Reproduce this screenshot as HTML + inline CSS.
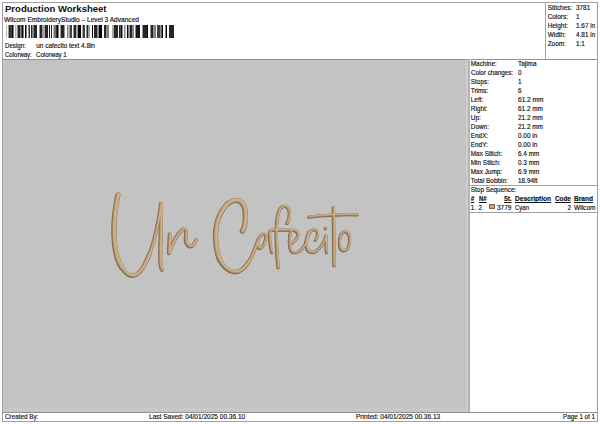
<!DOCTYPE html>
<html><head><meta charset="utf-8"><style>
html,body{margin:0;padding:0;background:#fff;}
body{width:600px;height:424px;position:relative;overflow:hidden;font-family:"Liberation Sans", sans-serif;color:#111;}
.t{position:absolute;white-space:nowrap;line-height:1;transform-origin:0 0;-webkit-text-stroke:0.15px #111;}
.r{position:absolute;}
</style></head><body>
<div class="r" style="left:2px;top:2px;width:594px;height:418px;border:1px solid #a0a0a0;"></div>
<div class="r" style="left:545px;top:2px;width:1px;height:57px;background:#a4a4a4;"></div>
<div class="r" style="left:2px;top:59px;width:596px;height:1px;background:#929292;"></div>
<div class="r" style="left:3px;top:60px;width:465px;height:352px;background:#c3c3c3;"></div>
<div class="r" style="left:3px;top:60px;width:1px;height:352px;background:#cbcbcb;"></div>
<div class="r" style="left:3px;top:408px;width:463px;height:3px;background:#c8c8c8;"></div>
<div class="r" style="left:466px;top:60px;width:2px;height:352px;background:#cecece;"></div>
<div class="r" style="left:468px;top:59px;width:2px;height:353px;background:#b4b4b4;"></div>
<div class="r" style="left:469px;top:185px;width:128px;height:1px;background:#a0a0a0;"></div>
<div class="r" style="left:469px;top:212px;width:128px;height:1px;background:#a0a0a0;"></div>
<div class="r" style="left:2px;top:412px;width:596px;height:1px;background:#929292;"></div>
<div class="r" style="left:489.2px;top:203.7px;width:5.8px;height:5.7px;background:#cf9f7e;box-sizing:border-box;border:1px solid #8a6249;"></div>
<svg class="r" style="left:0;top:0" width="600" height="60" viewBox="0 0 600 60"><rect x="6" y="25" width="1" height="13" fill="rgb(178,178,178)"/><rect x="8.5" y="25" width="3" height="13" fill="rgb(51,51,51)"/><rect x="11.5" y="25" width="2" height="13" fill="rgb(0,0,0)"/><rect x="15" y="25" width="1.5" height="13" fill="rgb(178,178,178)"/><rect x="17.5" y="25" width="2.5" height="13" fill="rgb(38,38,38)"/><rect x="20" y="25" width="1.5" height="13" fill="rgb(128,128,128)"/><rect x="21.5" y="25" width="2" height="13" fill="rgb(0,0,0)"/><rect x="25" y="25" width="1.5" height="13" fill="rgb(0,0,0)"/><rect x="28.5" y="25" width="1.5" height="13" fill="rgb(51,51,51)"/><rect x="31" y="25" width="1.5" height="13" fill="rgb(38,38,38)"/><rect x="32.5" y="25" width="1.5" height="13" fill="rgb(128,128,128)"/><rect x="34" y="25" width="3" height="13" fill="rgb(38,38,38)"/><rect x="39.5" y="25" width="3" height="13" fill="rgb(38,38,38)"/><rect x="42.5" y="25" width="2.5" height="13" fill="rgb(166,166,166)"/><rect x="45" y="25" width="3" height="13" fill="rgb(38,38,38)"/><rect x="49" y="25" width="1" height="13" fill="rgb(38,38,38)"/><rect x="51" y="25" width="1" height="13" fill="rgb(38,38,38)"/><rect x="53.5" y="25" width="2.5" height="13" fill="rgb(115,115,115)"/><rect x="56" y="25" width="1" height="13" fill="rgb(51,51,51)"/><rect x="57" y="25" width="1.5" height="13" fill="rgb(0,0,0)"/><rect x="60" y="25" width="1" height="13" fill="rgb(153,153,153)"/><rect x="61" y="25" width="3.5" height="13" fill="rgb(38,38,38)"/><rect x="67" y="25" width="1.5" height="13" fill="rgb(128,128,128)"/><rect x="69.5" y="25" width="2.5" height="13" fill="rgb(64,64,64)"/><rect x="73.5" y="25" width="2.5" height="13" fill="rgb(38,38,38)"/><rect x="76" y="25" width="2" height="13" fill="rgb(166,166,166)"/><rect x="78" y="25" width="3" height="13" fill="rgb(0,0,0)"/><rect x="82.5" y="25" width="2.5" height="13" fill="rgb(64,64,64)"/><rect x="86.5" y="25" width="2" height="13" fill="rgb(38,38,38)"/><rect x="88.5" y="25" width="1.5" height="13" fill="rgb(166,166,166)"/><rect x="92" y="25" width="1" height="13" fill="rgb(0,0,0)"/><rect x="94" y="25" width="3" height="13" fill="rgb(38,38,38)"/><rect x="97" y="25" width="2" height="13" fill="rgb(140,140,140)"/><rect x="99" y="25" width="3" height="13" fill="rgb(0,0,0)"/><rect x="104" y="25" width="2.5" height="13" fill="rgb(38,38,38)"/><rect x="107.5" y="25" width="1" height="13" fill="rgb(0,0,0)"/><rect x="112" y="25" width="2" height="13" fill="rgb(166,166,166)"/><rect x="114" y="25" width="4" height="13" fill="rgb(38,38,38)"/><rect x="119" y="25" width="1.5" height="13" fill="rgb(38,38,38)"/><rect x="120.5" y="25" width="2" height="13" fill="rgb(13,13,13)"/><rect x="124" y="25" width="1.5" height="13" fill="rgb(128,128,128)"/><rect x="127" y="25" width="1.5" height="13" fill="rgb(0,0,0)"/><rect x="129.5" y="25" width="3" height="13" fill="rgb(38,38,38)"/><rect x="132.5" y="25" width="1.5" height="13" fill="rgb(128,128,128)"/><rect x="135.5" y="25" width="4.5" height="13" fill="rgb(25,25,25)"/><rect x="142.5" y="25" width="4.5" height="13" fill="rgb(38,38,38)"/><rect x="147" y="25" width="1" height="13" fill="rgb(0,0,0)"/><rect x="150.5" y="25" width="3" height="13" fill="rgb(38,38,38)"/><rect x="154.5" y="25" width="1" height="13" fill="rgb(0,0,0)"/><rect x="157" y="25" width="3" height="13" fill="rgb(64,64,64)"/><rect x="160" y="25" width="1.5" height="13" fill="rgb(140,140,140)"/><rect x="161.5" y="25" width="1.5" height="13" fill="rgb(0,0,0)"/><rect x="165.5" y="25" width="1.5" height="13" fill="rgb(0,0,0)"/><rect x="169" y="25" width="5" height="13" fill="rgb(38,38,38)"/></svg>
<svg class="r" style="left:0;top:0" width="600" height="424" viewBox="0 0 600 424">
<g fill="none" stroke-linecap="round" stroke-linejoin="round">
<g stroke="#76614a" transform="translate(-0.45,0.45)"><path d="M118.3,194.5 C116,205 114,220 114.3,232 C114.5,248 117,260 122,267" stroke-width="5.0"/><path d="M122,267 C125,272 129,275.5 133,275.5 C139,275 145,266 150,253" stroke-width="4.2"/><path d="M150,253 C155,240 159,220 161.3,203.5" stroke-width="3.4"/><path d="M161.3,203.5 C161.5,220 160.5,245 160.6,258 C160.7,264 161.5,268 162.5,269.5" stroke-width="3.9"/><path d="M170,233.8 C169.8,240 169.3,248 169.3,253 C172,245 177.5,234 182.5,229.5 C185.5,227 187,229.5 186.3,234 C185.6,238.5 186,244 189.5,246 C192.5,247 195,243 196.6,239.8" stroke-width="3.6"/><path d="M242.7,230.7 C245,227 246,218 245.5,211 C245,204.5 241,200 236.5,200 C231.5,200 227,203 223,209.5 C219,215.5 216.5,223 216,232 C215.6,241 216.5,251 220,259.5" stroke-width="5.0"/><path d="M220,259.5 C223,265.5 228,270.5 234,271.6 C240,272.5 245,268 249,261.5" stroke-width="4.2"/><path d="M249,261.5 C252.5,256 255.5,248 257.5,242" stroke-width="3.4"/><path d="M257.5,242 C258.5,238 261.5,234 264,233.8 C266.5,233.6 266.8,236.5 265.8,239.5 C264.8,243 262.5,248 260,248.3 C258,248.5 257.8,246 258.5,243" stroke-width="3.0"/><path d="M269.8,233 C270,240 270.5,248 272.3,252.2" stroke-width="3.0"/><path d="M269.8,233 C269.8,231 271,229.8 273,229.8 L291,229.7 C295,229.6 298.5,231.5 298.3,234.5 C298,238 294,242.5 290.8,243.3" stroke-width="3.0"/><path d="M287.3,223.1 C289.5,220 290,214 289.6,211 C289,207.5 287,206 284.8,206 C282,206 280,208.5 278.8,212 C277,218 276.6,226 276.6,235 C276.8,245 277.3,257 278.5,267.4" stroke-width="3.3"/><path d="M291.5,230.5 C289.5,234 289,245 291,250 C293,253.5 298,253 301.5,249.5 C303.5,247.5 305,245 306.5,242.6" stroke-width="3.0"/><path d="M306.3,242.6 C307,239 308.5,234 310.5,231.5 C312,229.5 314,229 315.8,229.6 C318,230.5 318.3,234 317.6,236 C317,238 316,239.5 315.5,240" stroke-width="3.0"/><path d="M309.5,231.5 C306.8,235 306,242 306.5,246 C307,250 309.5,252.2 312.9,252.1 C317,252 320,248 323,243.6 C324.5,241 325.5,238.5 326.1,236" stroke-width="3.0"/><path d="M326.1,235.5 C326.2,242 326.3,248 326.8,252.3" stroke-width="3.0"/><path d="M333.7,207.4 C333.9,225 334.1,250 334.4,265.5" stroke-width="3.3"/><path d="M309.2,216.8 C320,215.2 345,213.8 357.7,214.6" stroke-width="3.0"/><path d="M348.5,232.5 C346.5,230.5 343.5,231 342,233.5 C340.3,236 339.7,240 339.8,243.5 C340,247.5 341.5,250.5 344,250.5 C347.5,250.5 350,246 350,239.5 C350,235 348.5,231.5 345.5,231.5" stroke-width="3.0"/></g>
<g stroke="#a48867"><path d="M118.3,194.5 C116,205 114,220 114.3,232 C114.5,248 117,260 122,267" stroke-width="4.50"/><path d="M122,267 C125,272 129,275.5 133,275.5 C139,275 145,266 150,253" stroke-width="3.70"/><path d="M150,253 C155,240 159,220 161.3,203.5" stroke-width="2.90"/><path d="M161.3,203.5 C161.5,220 160.5,245 160.6,258 C160.7,264 161.5,268 162.5,269.5" stroke-width="3.40"/><path d="M170,233.8 C169.8,240 169.3,248 169.3,253 C172,245 177.5,234 182.5,229.5 C185.5,227 187,229.5 186.3,234 C185.6,238.5 186,244 189.5,246 C192.5,247 195,243 196.6,239.8" stroke-width="3.10"/><path d="M242.7,230.7 C245,227 246,218 245.5,211 C245,204.5 241,200 236.5,200 C231.5,200 227,203 223,209.5 C219,215.5 216.5,223 216,232 C215.6,241 216.5,251 220,259.5" stroke-width="4.50"/><path d="M220,259.5 C223,265.5 228,270.5 234,271.6 C240,272.5 245,268 249,261.5" stroke-width="3.70"/><path d="M249,261.5 C252.5,256 255.5,248 257.5,242" stroke-width="2.90"/><path d="M257.5,242 C258.5,238 261.5,234 264,233.8 C266.5,233.6 266.8,236.5 265.8,239.5 C264.8,243 262.5,248 260,248.3 C258,248.5 257.8,246 258.5,243" stroke-width="2.50"/><path d="M269.8,233 C270,240 270.5,248 272.3,252.2" stroke-width="2.50"/><path d="M269.8,233 C269.8,231 271,229.8 273,229.8 L291,229.7 C295,229.6 298.5,231.5 298.3,234.5 C298,238 294,242.5 290.8,243.3" stroke-width="2.50"/><path d="M287.3,223.1 C289.5,220 290,214 289.6,211 C289,207.5 287,206 284.8,206 C282,206 280,208.5 278.8,212 C277,218 276.6,226 276.6,235 C276.8,245 277.3,257 278.5,267.4" stroke-width="2.80"/><path d="M291.5,230.5 C289.5,234 289,245 291,250 C293,253.5 298,253 301.5,249.5 C303.5,247.5 305,245 306.5,242.6" stroke-width="2.50"/><path d="M306.3,242.6 C307,239 308.5,234 310.5,231.5 C312,229.5 314,229 315.8,229.6 C318,230.5 318.3,234 317.6,236 C317,238 316,239.5 315.5,240" stroke-width="2.50"/><path d="M309.5,231.5 C306.8,235 306,242 306.5,246 C307,250 309.5,252.2 312.9,252.1 C317,252 320,248 323,243.6 C324.5,241 325.5,238.5 326.1,236" stroke-width="2.50"/><path d="M326.1,235.5 C326.2,242 326.3,248 326.8,252.3" stroke-width="2.50"/><path d="M333.7,207.4 C333.9,225 334.1,250 334.4,265.5" stroke-width="2.80"/><path d="M309.2,216.8 C320,215.2 345,213.8 357.7,214.6" stroke-width="2.50"/><path d="M348.5,232.5 C346.5,230.5 343.5,231 342,233.5 C340.3,236 339.7,240 339.8,243.5 C340,247.5 341.5,250.5 344,250.5 C347.5,250.5 350,246 350,239.5 C350,235 348.5,231.5 345.5,231.5" stroke-width="2.50"/></g>
<g stroke="#c6a880" transform="translate(0.3,-0.3)"><path d="M118.3,194.5 C116,205 114,220 114.3,232 C114.5,248 117,260 122,267" stroke-width="3.20"/><path d="M122,267 C125,272 129,275.5 133,275.5 C139,275 145,266 150,253" stroke-width="2.40"/><path d="M150,253 C155,240 159,220 161.3,203.5" stroke-width="1.60"/><path d="M161.3,203.5 C161.5,220 160.5,245 160.6,258 C160.7,264 161.5,268 162.5,269.5" stroke-width="2.10"/><path d="M170,233.8 C169.8,240 169.3,248 169.3,253 C172,245 177.5,234 182.5,229.5 C185.5,227 187,229.5 186.3,234 C185.6,238.5 186,244 189.5,246 C192.5,247 195,243 196.6,239.8" stroke-width="1.80"/><path d="M242.7,230.7 C245,227 246,218 245.5,211 C245,204.5 241,200 236.5,200 C231.5,200 227,203 223,209.5 C219,215.5 216.5,223 216,232 C215.6,241 216.5,251 220,259.5" stroke-width="3.20"/><path d="M220,259.5 C223,265.5 228,270.5 234,271.6 C240,272.5 245,268 249,261.5" stroke-width="2.40"/><path d="M249,261.5 C252.5,256 255.5,248 257.5,242" stroke-width="1.60"/><path d="M257.5,242 C258.5,238 261.5,234 264,233.8 C266.5,233.6 266.8,236.5 265.8,239.5 C264.8,243 262.5,248 260,248.3 C258,248.5 257.8,246 258.5,243" stroke-width="1.20"/><path d="M269.8,233 C270,240 270.5,248 272.3,252.2" stroke-width="1.20"/><path d="M269.8,233 C269.8,231 271,229.8 273,229.8 L291,229.7 C295,229.6 298.5,231.5 298.3,234.5 C298,238 294,242.5 290.8,243.3" stroke-width="1.20"/><path d="M287.3,223.1 C289.5,220 290,214 289.6,211 C289,207.5 287,206 284.8,206 C282,206 280,208.5 278.8,212 C277,218 276.6,226 276.6,235 C276.8,245 277.3,257 278.5,267.4" stroke-width="1.50"/><path d="M291.5,230.5 C289.5,234 289,245 291,250 C293,253.5 298,253 301.5,249.5 C303.5,247.5 305,245 306.5,242.6" stroke-width="1.20"/><path d="M306.3,242.6 C307,239 308.5,234 310.5,231.5 C312,229.5 314,229 315.8,229.6 C318,230.5 318.3,234 317.6,236 C317,238 316,239.5 315.5,240" stroke-width="1.20"/><path d="M309.5,231.5 C306.8,235 306,242 306.5,246 C307,250 309.5,252.2 312.9,252.1 C317,252 320,248 323,243.6 C324.5,241 325.5,238.5 326.1,236" stroke-width="1.20"/><path d="M326.1,235.5 C326.2,242 326.3,248 326.8,252.3" stroke-width="1.20"/><path d="M333.7,207.4 C333.9,225 334.1,250 334.4,265.5" stroke-width="1.50"/><path d="M309.2,216.8 C320,215.2 345,213.8 357.7,214.6" stroke-width="1.20"/><path d="M348.5,232.5 C346.5,230.5 343.5,231 342,233.5 C340.3,236 339.7,240 339.8,243.5 C340,247.5 341.5,250.5 344,250.5 C347.5,250.5 350,246 350,239.5 C350,235 348.5,231.5 345.5,231.5" stroke-width="1.20"/></g>
<g stroke="#d8c09a" opacity="0.55" transform="translate(0.5,-0.5)"><path d="M118.3,194.5 C116,205 114,220 114.3,232 C114.5,248 117,260 122,267" stroke-width="1.25"/><path d="M122,267 C125,272 129,275.5 133,275.5 C139,275 145,266 150,253" stroke-width="1.05"/><path d="M150,253 C155,240 159,220 161.3,203.5" stroke-width="0.85"/><path d="M161.3,203.5 C161.5,220 160.5,245 160.6,258 C160.7,264 161.5,268 162.5,269.5" stroke-width="0.97"/><path d="M170,233.8 C169.8,240 169.3,248 169.3,253 C172,245 177.5,234 182.5,229.5 C185.5,227 187,229.5 186.3,234 C185.6,238.5 186,244 189.5,246 C192.5,247 195,243 196.6,239.8" stroke-width="0.90"/><path d="M242.7,230.7 C245,227 246,218 245.5,211 C245,204.5 241,200 236.5,200 C231.5,200 227,203 223,209.5 C219,215.5 216.5,223 216,232 C215.6,241 216.5,251 220,259.5" stroke-width="1.25"/><path d="M220,259.5 C223,265.5 228,270.5 234,271.6 C240,272.5 245,268 249,261.5" stroke-width="1.05"/><path d="M249,261.5 C252.5,256 255.5,248 257.5,242" stroke-width="0.85"/><path d="M257.5,242 C258.5,238 261.5,234 264,233.8 C266.5,233.6 266.8,236.5 265.8,239.5 C264.8,243 262.5,248 260,248.3 C258,248.5 257.8,246 258.5,243" stroke-width="0.75"/><path d="M269.8,233 C270,240 270.5,248 272.3,252.2" stroke-width="0.75"/><path d="M269.8,233 C269.8,231 271,229.8 273,229.8 L291,229.7 C295,229.6 298.5,231.5 298.3,234.5 C298,238 294,242.5 290.8,243.3" stroke-width="0.75"/><path d="M287.3,223.1 C289.5,220 290,214 289.6,211 C289,207.5 287,206 284.8,206 C282,206 280,208.5 278.8,212 C277,218 276.6,226 276.6,235 C276.8,245 277.3,257 278.5,267.4" stroke-width="0.82"/><path d="M291.5,230.5 C289.5,234 289,245 291,250 C293,253.5 298,253 301.5,249.5 C303.5,247.5 305,245 306.5,242.6" stroke-width="0.75"/><path d="M306.3,242.6 C307,239 308.5,234 310.5,231.5 C312,229.5 314,229 315.8,229.6 C318,230.5 318.3,234 317.6,236 C317,238 316,239.5 315.5,240" stroke-width="0.75"/><path d="M309.5,231.5 C306.8,235 306,242 306.5,246 C307,250 309.5,252.2 312.9,252.1 C317,252 320,248 323,243.6 C324.5,241 325.5,238.5 326.1,236" stroke-width="0.75"/><path d="M326.1,235.5 C326.2,242 326.3,248 326.8,252.3" stroke-width="0.75"/><path d="M333.7,207.4 C333.9,225 334.1,250 334.4,265.5" stroke-width="0.82"/><path d="M309.2,216.8 C320,215.2 345,213.8 357.7,214.6" stroke-width="0.75"/><path d="M348.5,232.5 C346.5,230.5 343.5,231 342,233.5 C340.3,236 339.7,240 339.8,243.5 C340,247.5 341.5,250.5 344,250.5 C347.5,250.5 350,246 350,239.5 C350,235 348.5,231.5 345.5,231.5" stroke-width="0.75"/></g>
</g>
<circle cx="325.3" cy="228.6" r="1.8" fill="#76614a"/>
<circle cx="325.7" cy="228.2" r="1.5" fill="#a48867"/>
<circle cx="326" cy="227.9" r="0.8" fill="#c6a880"/>
</svg>
<div class="t" style="left:5.30px;top:4.09px;font-size:9.7px;font-weight:bold;-webkit-text-stroke:0;transform:scaleX(0.9842);">Production Worksheet</div>
<div class="t" style="left:4.20px;top:17.28px;font-size:6.4px;transform:scaleX(1.0298);">Wilcom EmbroideryStudio – Level 3 Advanced</div>
<div class="t" style="left:4.70px;top:42.78px;font-size:6.4px;transform:scaleX(0.9638);">Design:</div>
<div class="t" style="left:36.30px;top:42.78px;font-size:6.4px;">un cafecito text 4.8in</div>
<div class="t" style="left:4.70px;top:51.88px;font-size:6.4px;transform:scaleX(0.9429);">Colorway:</div>
<div class="t" style="left:36.30px;top:51.88px;font-size:6.4px;transform:scaleX(0.9626);">Colorway 1</div>
<div class="t" style="left:547.70px;top:4.78px;font-size:6.4px;">Stitches:</div>
<div class="t" style="left:576.00px;top:4.78px;font-size:6.4px;">3781</div>
<div class="t" style="left:547.70px;top:13.78px;font-size:6.4px;">Colors:</div>
<div class="t" style="left:576.00px;top:13.78px;font-size:6.4px;">1</div>
<div class="t" style="left:547.70px;top:22.58px;font-size:6.4px;">Height:</div>
<div class="t" style="left:576.00px;top:22.58px;font-size:6.4px;">1.67 in</div>
<div class="t" style="left:547.70px;top:31.58px;font-size:6.4px;">Width:</div>
<div class="t" style="left:576.00px;top:31.58px;font-size:6.4px;">4.81 in</div>
<div class="t" style="left:547.70px;top:40.88px;font-size:6.4px;">Zoom:</div>
<div class="t" style="left:576.00px;top:40.88px;font-size:6.4px;">1:1</div>
<div class="t" style="left:4.50px;top:414.08px;font-size:6.4px;transform:scaleX(0.9862);">Created By:</div>
<div class="t" style="left:149.00px;top:414.08px;font-size:6.4px;transform:scaleX(1.0211);">Last Saved: 04/01/2025 00.36.10</div>
<div class="t" style="left:356.00px;top:414.08px;font-size:6.4px;transform:scaleX(1.0207);">Printed: 04/01/2025 00.36.13</div>
<div class="t" style="left:562.50px;top:414.08px;font-size:6.4px;transform:scaleX(0.9808);">Page 1 of 1</div>
<div class="t" style="left:470.80px;top:187.28px;font-size:6.4px;">Stop Sequence:</div>
<div class="t" style="left:470.80px;top:61.08px;font-size:6.4px;">Machine:</div>
<div class="t" style="left:518.00px;top:61.08px;font-size:6.4px;">Tajima</div>
<div class="t" style="left:470.80px;top:70.06px;font-size:6.4px;transform:scaleX(0.9767);">Color changes:</div>
<div class="t" style="left:518.00px;top:70.06px;font-size:6.4px;">0</div>
<div class="t" style="left:470.80px;top:79.03px;font-size:6.4px;">Stops:</div>
<div class="t" style="left:518.00px;top:79.03px;font-size:6.4px;">1</div>
<div class="t" style="left:470.80px;top:88.01px;font-size:6.4px;">Trims:</div>
<div class="t" style="left:518.00px;top:88.01px;font-size:6.4px;">6</div>
<div class="t" style="left:470.80px;top:96.98px;font-size:6.4px;">Left:</div>
<div class="t" style="left:518.00px;top:96.98px;font-size:6.4px;transform:scaleX(1.0270);">61.2 mm</div>
<div class="t" style="left:470.80px;top:105.96px;font-size:6.4px;">Right:</div>
<div class="t" style="left:518.00px;top:105.96px;font-size:6.4px;">61.2 mm</div>
<div class="t" style="left:470.80px;top:114.93px;font-size:6.4px;">Up:</div>
<div class="t" style="left:518.00px;top:114.93px;font-size:6.4px;">21.2 mm</div>
<div class="t" style="left:470.80px;top:123.91px;font-size:6.4px;">Down:</div>
<div class="t" style="left:518.00px;top:123.91px;font-size:6.4px;">21.2 mm</div>
<div class="t" style="left:470.80px;top:132.88px;font-size:6.4px;">EndX:</div>
<div class="t" style="left:518.00px;top:132.88px;font-size:6.4px;">0.00 in</div>
<div class="t" style="left:470.80px;top:141.86px;font-size:6.4px;">EndY:</div>
<div class="t" style="left:518.00px;top:141.86px;font-size:6.4px;">0.00 in</div>
<div class="t" style="left:470.80px;top:150.83px;font-size:6.4px;">Max Stitch:</div>
<div class="t" style="left:518.00px;top:150.83px;font-size:6.4px;">6.4 mm</div>
<div class="t" style="left:470.80px;top:159.81px;font-size:6.4px;">Min Stitch:</div>
<div class="t" style="left:518.00px;top:159.81px;font-size:6.4px;">0.3 mm</div>
<div class="t" style="left:470.80px;top:168.78px;font-size:6.4px;">Max Jump:</div>
<div class="t" style="left:518.00px;top:168.78px;font-size:6.4px;">6.9 mm</div>
<div class="t" style="left:470.80px;top:177.76px;font-size:6.4px;">Total Bobbin:</div>
<div class="t" style="left:518.00px;top:177.76px;font-size:6.4px;">18.94ft</div>
<div class="t" style="left:470.80px;top:204.68px;font-size:6.4px;">1.</div>
<div class="t" style="left:478.40px;top:204.68px;font-size:6.4px;">2</div>
<div class="t" style="left:497.30px;top:204.68px;font-size:6.4px;transform:scaleX(1.0162);">3779</div>
<div class="t" style="left:515.10px;top:204.68px;font-size:6.4px;transform:scaleX(0.9437);">Cyan</div>
<div class="t" style="left:567.60px;top:204.68px;font-size:6.4px;">2</div>
<div class="t" style="left:574.30px;top:204.68px;font-size:6.4px;transform:scaleX(1.0281);">Wilcom</div>
<div class="t" style="left:470.80px;top:195.88px;font-size:6.4px;font-weight:bold;text-decoration:underline;text-underline-offset:0.5px;text-decoration-thickness:0.8px;">#</div>
<div class="t" style="left:478.90px;top:195.88px;font-size:6.4px;font-weight:bold;text-decoration:underline;text-underline-offset:0.5px;text-decoration-thickness:0.8px;transform:scaleX(0.9286);">N#</div>
<div class="t" style="left:504.00px;top:195.88px;font-size:6.4px;font-weight:bold;text-decoration:underline;text-underline-offset:0.5px;text-decoration-thickness:0.8px;transform:scaleX(0.9296);">St.</div>
<div class="t" style="left:514.70px;top:195.88px;font-size:6.4px;font-weight:bold;text-decoration:underline;text-underline-offset:0.5px;text-decoration-thickness:0.8px;transform:scaleX(1.0269);">Description</div>
<div class="t" style="left:554.70px;top:195.88px;font-size:6.4px;font-weight:bold;text-decoration:underline;text-underline-offset:0.5px;text-decoration-thickness:0.8px;transform:scaleX(0.9925);">Code</div>
<div class="t" style="left:574.30px;top:195.88px;font-size:6.4px;font-weight:bold;text-decoration:underline;text-underline-offset:0.5px;text-decoration-thickness:0.8px;transform:scaleX(1.0237);">Brand</div>
</body></html>
